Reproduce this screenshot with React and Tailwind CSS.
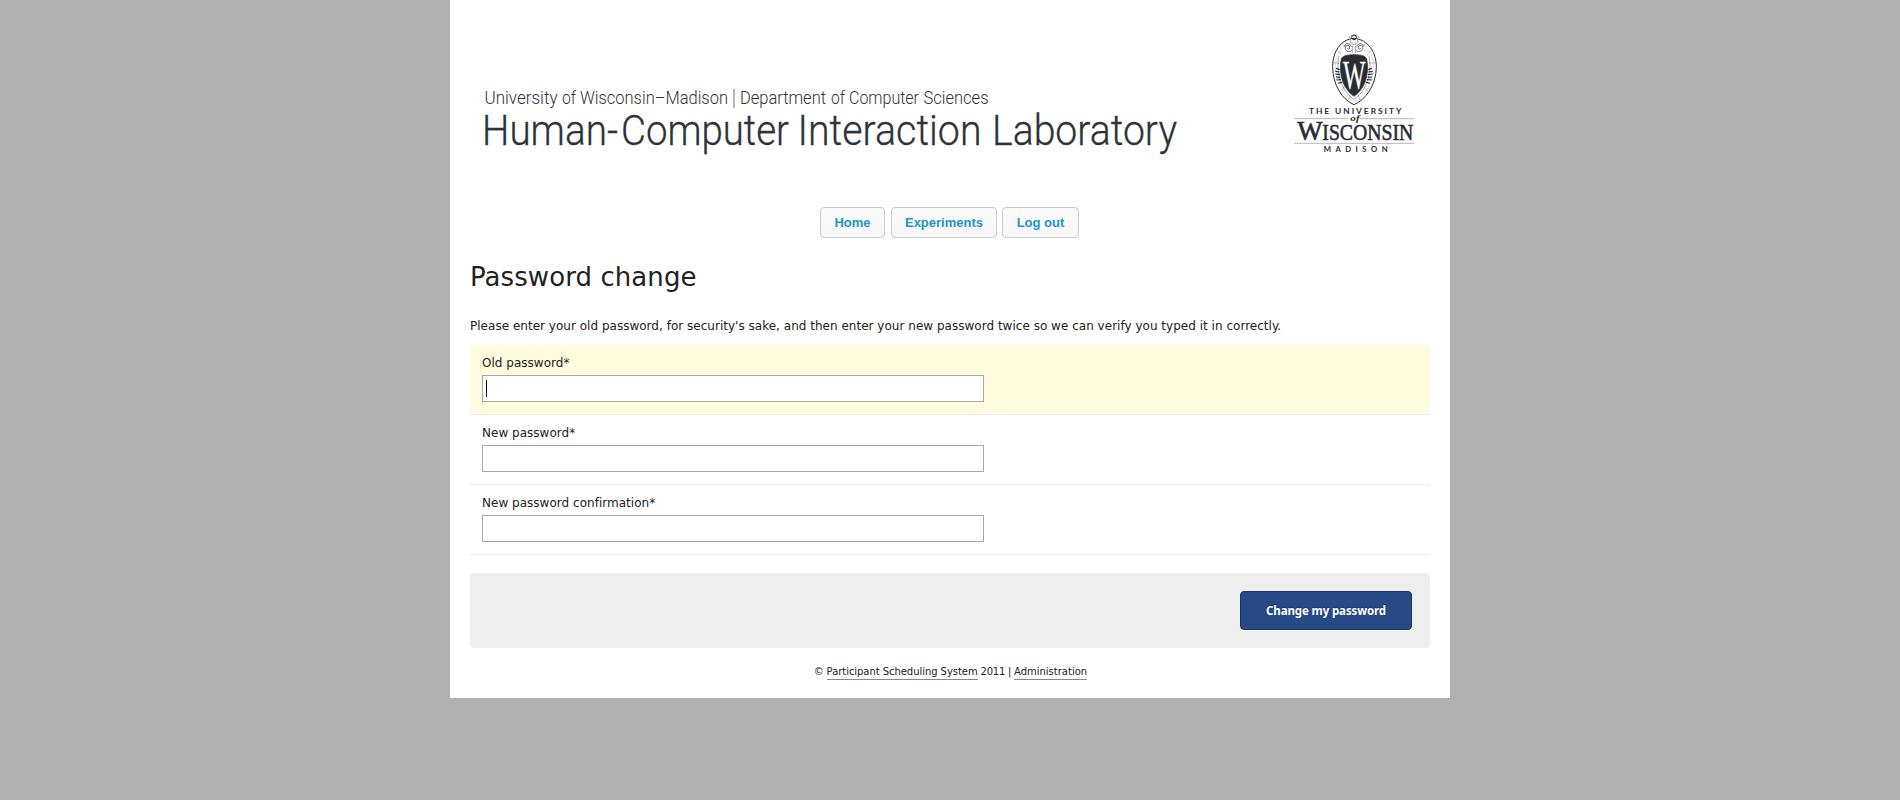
const navItems = [
  { label: 'Home', className: 'w-[65px] mr-[6px]' },
  { label: 'Experiments', className: 'w-[106px] mr-[5px]' },
  { label: 'Log out', className: 'w-[77px]' },
];

const subtitleWords = [
  ['University', 484.5, 73],
  ['of', 562, 14],
  ['Wisconsin–Madison', 580, 148],
  ['Department', 740, 86],
  ['of', 831, 14],
  ['Computer', 849, 70],
  ['Sciences', 923.5, 65],
];

const titleWords = [
  ['Human-', 482, 136],
  ['Computer', 621, 168],
  ['Interaction', 797.5, 184],
  ['Laboratory', 992, 185],
];

function Crest() {
  return (
    <svg className="block overflow-visible" width="150" height="150" viewBox="0 0 450 450" fill="none" stroke="#282d31">
      <path d="M222 55C181 58 158 96 158 140C158 196 188 240 222 254C256 240 289 196 289 140C289 96 263 58 222 55Z" strokeWidth="3" />
      <path d="M222 66C188 70 166 100 166 140C166 191 193 232 222 245C252 232 281 191 281 140C281 100 257 70 222 66Z" strokeWidth="1" opacity=".45" />
      <path d="M184 116C190 106 203 104 222 104C241 104 254 106 260 116C269 160 256 206 222 229C188 206 175 160 184 116Z" fill="#282d31" strokeWidth="2" />
      <path d="M177 108C167 152 183 214 222 238C261 214 277 152 267 108M207 54C208 43 237 43 238 54M211 60C208 67 215 72 222 74C229 72 236 67 233 60M217 99V77M227 99V77" strokeWidth="1.6" opacity=".8" />
      <circle cx="222" cy="52" r="7" strokeWidth="3" />
      <path d="M216 91C207 100 193 91 196 81C199 73 211 76 209 84C208 90 202 88 203 84M228 91C237 100 251 91 248 81C245 73 233 76 235 84C236 90 242 88 241 84M194 79C195 67 208 69 216 80M250 79C249 67 236 69 228 80" strokeWidth="2" />
      <path d="M171 91L184 103M275 91L262 103M159 128L178 130M288 128L267 130M165 181L181 172M281 181L264 172M181 214L194 201M264 214L251 201M205 240L211 226M240 240L234 226M186 70L197 82M259 70L248 82" strokeWidth="1.3" opacity=".7" />
      <path d="M168 145L179 149M166 154L179 156M166 162L180 164M168 171L181 172M170 180L183 179M175 190L187 186M276 145L265 149M278 154L265 156M278 162L264 164M276 171L263 172M274 180L261 179M269 190L257 186" strokeWidth="3.5" />
      <g fill="#282d31" stroke="none" fontFamily="'Liberation Serif', serif">
        <text x="189" y="205" fontSize="121" fill="#fff" stroke="#fff" strokeWidth="1" textLength="67" lengthAdjust="spacingAndGlyphs">W</text>
        <text x="87" y="283" fontSize="25" fontWeight="bold" fontFamily="Lato, sans-serif" textLength="277">THE UNIVERSITY</text>
        <text x="211" y="304" fontSize="27" fontStyle="italic" fontWeight="bold" textLength="28" lengthAdjust="spacingAndGlyphs">of</text>
        <text x="52" y="359" fontSize="82" stroke="#282d31" strokeWidth="2" textLength="76" lengthAdjust="spacingAndGlyphs">W</text>
        <text x="127" y="359" fontSize="72" stroke="#282d31" strokeWidth="1.8" textLength="273" lengthAdjust="spacingAndGlyphs">ISCONSIN</text>
        <text x="131" y="395" fontSize="23" fontWeight="bold" fontFamily="Lato, sans-serif" textLength="192">MADISON</text>
      </g>
      <path d="M43 296H205M240 296H404M43 370H404" strokeWidth="2" opacity=".5" />
    </svg>
  );
}

function Banner() {
  return (
    <header className="flex h-[207px] items-start pl-[30px] pt-5">
      <svg className="block" width="800" height="150" viewBox="480 20 800 150" fill="#2d3337" fontFamily="Roboto, sans-serif" fontWeight="300">
        <g fontSize="17.8">
          {subtitleWords.map(([word, x, width]) => (
            <text key={x} x={x} y="104" textLength={width} lengthAdjust="spacingAndGlyphs">{word}</text>
          ))}
        </g>
        <path d="M734 89V108" stroke="#6b7073" />
        <g fontSize="42" stroke="#2d3337" strokeWidth=".3">
          {titleWords.map(([word, x, width]) => (
            <text key={x} x={x} y="144.5" textLength={width} lengthAdjust="spacingAndGlyphs">{word}</text>
          ))}
        </g>
      </svg>
      <Crest />
    </header>
  );
}

function Field({ label, active }) {
  return (
    <div className={active ? 'h-[70px] rounded-t-[2px] border-b border-[#eeeeee] bg-[#fffbdf] px-3 pt-[9px]' : 'h-[70px] border-b border-[#eeeeee] px-3 pt-[9px]'}>
      <label className="block h-[21px] text-[12px] leading-[18px] tracking-[0.02px] [font-variant-ligatures:common-ligatures]">{label}*</label>
      <div className="flex h-[27px] w-[502px] items-center border border-[#a8a8a8] bg-white pl-[3px]">
        {active && <span className="h-[17px] w-px bg-black" />}
      </div>
    </div>
  );
}

export default function App() {
  return (
    <div className="h-[800px] bg-[#b0b0b0] font-['DejaVu_Sans',sans-serif] text-[#222222]">
      <div className="mx-auto h-[698px] w-[1000px] bg-white">
        <Banner />
        <nav className="flex h-[31px] pl-[370px]">
          {navItems.map(({ label, className }) => (
            <a key={label} className={`${className} flex h-[31px] items-center justify-center rounded-[4px] border border-[#cccccc] bg-linear-to-b from-[#fbfbfb] to-[#f7f7f7] font-['Liberation_Sans',sans-serif] text-[13px] font-bold text-[#1f94c7]`}>
              {label}
            </a>
          ))}
        </nav>
        <main className="px-5">
          <h1 className="pt-[22px] text-[26px] leading-[34px] tracking-[0.08px]">Password change</h1>
          <p className="mt-[23px] h-[28px] whitespace-nowrap text-[12px] leading-[18px] tracking-[0.018px]">
            Please enter your old password, for security's sake, and then enter your new password twice so we can verify you typed it in correctly.
          </p>
          <form>
            <Field label="Old password" active />
            <Field label="New password" />
            <Field label="New password confirmation" />
            <div className="mt-[18px] flex h-[75px] items-center justify-end rounded-[4px] bg-[#eeeeee] pr-[18px]">
              <button type="button" className="h-[39px] w-[172px] rounded-[4px] border border-[#1a3560] bg-[#264a85] font-['Noto_Sans',sans-serif] text-[11.5px] font-bold tracking-[-0.12px] text-white shadow-[0_1px_0_#ffffff] [text-shadow:0_-1px_1px_#1a3560]">
                Change my password
              </button>
            </div>
          </form>
        </main>
        <footer className="flex justify-center whitespace-pre pl-px pt-[17px] text-[10px] leading-[14px]">
          <span className="tracking-[-0.2px]">© </span>
          <a className="border-b border-[#888888] tracking-[-0.05px]">Participant Scheduling System</a>
          <span className="tracking-[-0.25px]"> 2011 | </span>
          <a className="border-b border-[#888888]">Administration</a>
        </footer>
      </div>
    </div>
  );
}
